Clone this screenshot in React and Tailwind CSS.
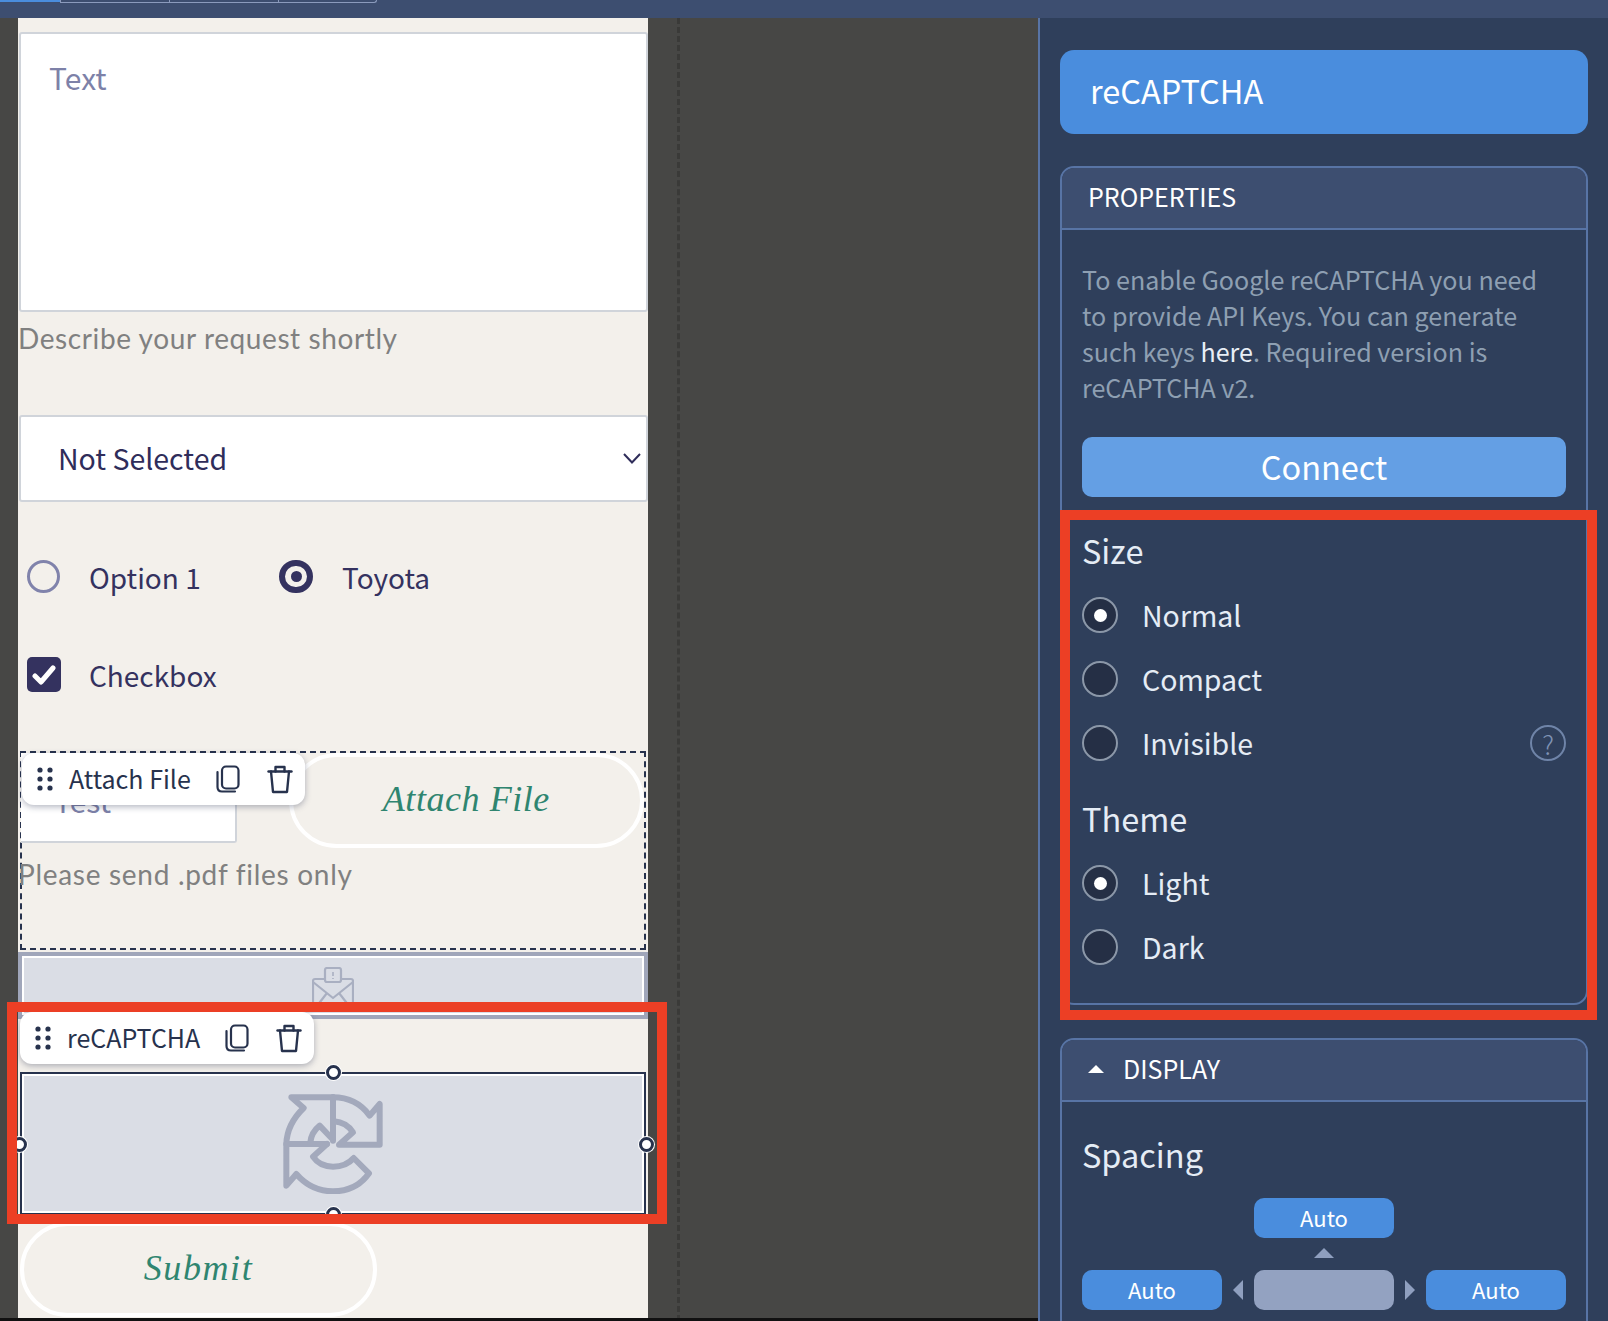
const ui = "font-['Noto_Sans_CJK_SC','Noto_Sans',sans-serif]";

function Radio({ checked }) {
    return (
        <span className="w-9 h-9 shrink-0 rounded-full border-2 border-[#8b97a8] bg-[#252f45] flex items-center justify-center">
            {checked && <span className="w-[13px] h-[13px] rounded-full bg-white" />}
        </span>
    );
}

function RadioRow({ label, checked, help }) {
    return (
        <div className="flex items-center h-9 mb-7 last:mb-0">
            <Radio checked={checked} />
            <span className="ml-[24px] text-[28.5px] leading-9 text-[#e5ecf5]">{label}</span>
            {help && (
                <span className="ml-auto w-9 h-9 rounded-full border-2 border-[#6f84a8] flex items-center justify-center text-[26px] font-light text-[#7f93b5]">?</span>
            )}
        </div>
    );
}

function AutoButton({ muted }) {
    return (
        <div className={`w-[140px] h-10 rounded-[10px] flex items-center justify-center pb-[2px] text-[22px] text-white ${muted ? 'bg-[#93a2c1]' : 'bg-[#4a8ddd]'}`}>
            {!muted && 'Auto'}
        </div>
    );
}

function CopyIcon() {
    return (
        <svg width="24" height="28" viewBox="0 0 24 28" fill="none" stroke="#27324d" strokeWidth="2.2" strokeLinecap="round" strokeLinejoin="round">
            <rect x="6" y="1.5" width="16.5" height="22" rx="4" />
            <path d="M1.5 7V22Q1.5 26.5 6 26.5H19" />
        </svg>
    );
}

function TrashIcon() {
    return (
        <svg width="26" height="29" viewBox="0 0 26 29" fill="none" stroke="#27324d" strokeWidth="2.4" strokeLinecap="round" strokeLinejoin="round">
            <path d="M1.5 6.5H24.5" />
            <path d="M8.5 6.5V2H17.5V6.5" />
            <path d="M4 6.5L6 27H20L22 6.5" />
        </svg>
    );
}

function Toolbar({ label, className }) {
    return (
        <div className={`absolute z-20 h-[52px] bg-white rounded-[12px] shadow-[0_2px_6px_rgba(40,50,80,0.35)] flex items-center pl-[15px] text-[#27324d] text-[25px] ${ui} ${className}`}>
            <svg width="16" height="24" viewBox="0 0 16 24" fill="#27324d">
                <circle cx="3" cy="3" r="2.6" /><circle cx="13" cy="3" r="2.6" />
                <circle cx="3" cy="12" r="2.6" /><circle cx="13" cy="12" r="2.6" />
                <circle cx="3" cy="21" r="2.6" /><circle cx="13" cy="21" r="2.6" />
            </svg>
            <span className="ml-[16px] whitespace-nowrap">{label}</span>
            <span className="ml-[25px] flex"><CopyIcon /></span>
            <span className="ml-[27px] flex"><TrashIcon /></span>
        </div>
    );
}

function Handle({ className }) {
    return <span className={`absolute z-10 w-[15px] h-[15px] rounded-full bg-white border-[3px] border-[#27324d] ring-1 ring-white ${className}`} />;
}

function RecaptchaIcon() {
    return (
        <svg width="100" height="100" viewBox="130 100 300 300" fill="none" stroke="#a3a9bc" strokeWidth="18" strokeLinejoin="round" strokeLinecap="round">
            <path d="M280 110H155L192 142Q142 190 140 250H262" />
            <path d="M212 245Q215 215 240 195L278 235" />
            <path d="M280 110V240" />
            <path d="M280 110Q350 110 390 165L420 130V252H298L340 215Q320 185 283 182" />
            <path d="M140 250V375L170 340Q215 392 280 392Q350 392 388 338L342 292Q320 318 280 318Q240 318 220 288L262 250" />
        </svg>
    );
}

function MailIcon() {
    return (
        <svg width="42" height="48" viewBox="0 0 42 48" fill="none" stroke="#a9afc1" strokeWidth="2.2" strokeLinejoin="round">
            <path d="M13 13V3Q13 1 15 1H27Q29 1 29 3V13Q29 15 27 15H15Q13 15 13 13Z" />
            <path d="M21 5V9M21 11V12" strokeWidth="1.6" />
            <path d="M13 12H3Q1 12 1 14V44H41V14Q41 12 39 12H29" />
            <path d="M1 15L21 31L41 15M1 44L15 26M41 44L27 26" />
        </svg>
    );
}

function Pill({ label, className }) {
    return (
        <div className={`h-[95px] rounded-[48px] border-4 border-white flex items-center justify-center pb-[4px] italic text-[36px] text-[#2f8570] font-['Liberation_Serif',serif] ${className}`}>
            {label}
        </div>
    );
}

function Section({ title, caret, className, children }) {
    return (
        <section className={`border-2 border-[#5874a5] rounded-[14px] overflow-hidden ${className}`}>
            <div className="h-[62px] bg-[#3d4e70] border-b-2 border-[#5874a5] flex items-center pl-[26px] pb-[2px] text-[25px] text-white">
                {caret && <span className="w-0 h-0 border-x-[8px] border-x-transparent border-b-[8px] border-b-white mr-[19px]" />}
                {title}
            </div>
            {children}
        </section>
    );
}

export default function App() {
    return (
        <div className={`relative w-[1608px] h-[1321px] overflow-hidden flex flex-col bg-[#2f3f5b] ${ui}`}>
            {/* top bar with cut off tabs */}
            <div className="h-[18px] shrink-0 bg-[#3d4e70] flex items-start">
                <div className="w-[60px] h-[2px] bg-[#4a8ddd]" />
                <div className="w-[109px] h-[3px] border-l border-b border-[#8b9bbd]" />
                <div className="w-[109px] h-[3px] border-l border-b border-[#8b9bbd]" />
                <div className="w-[99px] h-[3px] border-l border-b border-r border-[#8b9bbd] rounded-br-[8px]" />
            </div>

            <div className="flex flex-1 min-h-0">
                {/* canvas */}
                <div className="relative w-[1040px] shrink-0 bg-[#474745] border-r-2 border-[#5874a5] pl-[18px]">
                    <div className="absolute left-[677px] top-0 bottom-0 border-l-[3px] border-dashed border-[#3a3a38]" />
                    <div className="absolute left-0 right-0 bottom-0 h-[3px] bg-[#111111]" />

                    <div className="relative w-[630px] h-[1300px] bg-[#f3f0eb] flex flex-col">
                        {/* textarea */}
                        <div className="mt-[14px] ml-px w-[629px] h-[280px] bg-white border-2 border-[#d0d4da] rounded-[3px] pl-[28px] pt-[21px] text-[30px] leading-[44px] text-[#7d81a8]">
                            Text
                        </div>
                        <div className="mt-[8px] h-[36px] text-[28px] leading-[36px] tracking-[0.6px] text-[#808080] font-['Lato',sans-serif]">
                            Describe your request shortly
                        </div>

                        {/* select */}
                        <div className="mt-[59px] ml-px w-[629px] h-[87px] bg-white border-2 border-[#d0d4da] rounded-[3px] flex items-center pl-[37px] pr-[5px] text-[28.5px] text-[#2f2d5a]">
                            Not Selected
                            <svg className="ml-auto" width="18" height="11" viewBox="0 0 18 11" fill="none" stroke="#2f2d5a" strokeWidth="2">
                                <path d="M1 1L9 9.5L17 1" />
                            </svg>
                        </div>

                        {/* radios */}
                        <div className="mt-[58px] h-[33px] pl-[9px] flex items-center text-[28px] text-[#34325f]">
                            <span className="w-[33px] h-[33px] rounded-full border-[3px] border-[#8083ab]" />
                            <span className="ml-[29px] w-[190px]">Option 1</span>
                            <span className="w-[34px] h-[33px] rounded-full border-[6px] border-[#34325f] flex items-center justify-center">
                                <span className="w-[11px] h-[11px] rounded-full bg-[#34325f]" />
                            </span>
                            <span className="ml-[29px]">Toyota</span>
                        </div>

                        {/* checkbox */}
                        <div className="mt-[64px] h-[35px] pl-[9px] flex items-center text-[28px] text-[#34325f]">
                            <span className="w-[34px] h-[35px] rounded-[5px] bg-[#34325f] flex items-center justify-center">
                                <svg width="24" height="20" viewBox="0 0 24 20" fill="none" stroke="#ffffff" strokeWidth="5" strokeLinecap="round" strokeLinejoin="round">
                                    <path d="M3 11L9 17L21 3" />
                                </svg>
                            </span>
                            <span className="ml-[28px]">Checkbox</span>
                        </div>

                        {/* attach file block */}
                        <div className="mt-[59px] ml-[2px] w-[626px] h-[199px] border-2 border-dashed border-[#27324d]">
                            <div className="flex">
                                <div className="w-[216px] h-[90px] -ml-[1px] bg-white border-r-2 border-b-2 border-[#d0d4da] rounded-br-[3px] pl-[33px] pt-[25px] text-[30px] leading-[44px] text-[#7d81a8]">
                                    Test
                                </div>
                                <Pill label="Attach File" className="ml-[52px] w-[356px] tracking-[0.55px]" />
                            </div>
                            <div className="mt-[8px] -ml-[4px] h-[36px] text-[28px] leading-[36px] tracking-[0.7px] text-[#808080] font-['Lato',sans-serif]">
                                Please send .pdf files only
                            </div>
                        </div>
                        <Toolbar label="Attach File" className="left-[4px] top-[735px] w-[283px]" />

                        {/* email placeholder */}
                        <div className="mt-[2px] h-[67px] shrink-0 bg-[#dadde5] border-4 border-[#a0a6ba] outline-2 -outline-offset-6 outline-white flex justify-center overflow-hidden pt-[11px]">
                            <MailIcon />
                        </div>

                        {/* selected recaptcha */}
                        <div className="relative mt-[53px] ml-[2px] w-[626px] h-[143px] shrink-0 border-2 border-[#27324d] bg-[#dadde5] outline-2 -outline-offset-4 outline-white flex items-center justify-center">
                            <RecaptchaIcon />
                            <Handle className="left-1/2 -top-[9px] -ml-[7px]" />
                            <Handle className="-left-[10px] top-1/2 -mt-[7px]" />
                            <Handle className="-right-[10px] top-1/2 -mt-[7px]" />
                            <Handle className="left-1/2 -bottom-[9px] -ml-[7px]" />
                        </div>
                        <Toolbar label="reCAPTCHA" className="left-[2px] top-[994px] w-[294px]" />

                        <Pill label="Submit" className="mt-[7px] ml-[2px] w-[357px] tracking-[1.6px]" />
                    </div>
                </div>

                {/* properties panel */}
                <div className="flex-1 min-w-0 pl-5 pr-5 pt-8">
                    <div className="h-[84px] rounded-[14px] bg-[#4a8ddd] flex items-center pl-[30px] pb-[4px] text-[32.5px] text-white">
                        reCAPTCHA
                    </div>

                    <Section title="PROPERTIES" className="mt-8 h-[839px]">
                        <div className="px-5 pt-[31px] text-[25.1px] leading-[36px] text-[#8e9fb2]">
                            To enable Google reCAPTCHA you need to provide API Keys. You can generate such keys <span className="text-[#e8eef6]">here</span>. Required version is reCAPTCHA v2.
                        </div>
                        <div className="mx-5 mt-[32px] h-[60px] rounded-[10px] bg-[#649fe4] flex items-center justify-center pb-[2px] text-[32.5px] text-white">
                            Connect
                        </div>
                        <div className="px-5 mt-[27px]">
                            <div className="h-[52px] text-[32.5px] leading-[52px] text-[#e5ecf5]">Size</div>
                            <div className="mt-[21px]">
                                <RadioRow label="Normal" checked />
                                <RadioRow label="Compact" />
                                <RadioRow label="Invisible" help />
                            </div>
                            <div className="mt-[31px] h-[52px] text-[32.5px] leading-[52px] text-[#e5ecf5]">Theme</div>
                            <div className="mt-[21px]">
                                <RadioRow label="Light" checked />
                                <RadioRow label="Dark" />
                            </div>
                        </div>
                    </Section>

                    <Section title="DISPLAY" caret className="mt-[33px] h-[300px]">
                        <div className="px-5 pt-[26px]">
                            <div className="h-[52px] text-[32.5px] leading-[52px] text-[#e5ecf5]">Spacing</div>
                            <div className="mt-[18px] flex flex-col items-center">
                                <AutoButton />
                                <span className="mt-[10px] mb-[12px] w-0 h-0 border-x-[10px] border-x-transparent border-b-[10px] border-b-[#8f9fbf]" />
                                <div className="w-full flex items-center justify-between">
                                    <AutoButton />
                                    <span className="w-0 h-0 border-y-[10px] border-y-transparent border-r-[10px] border-r-[#8f9fbf]" />
                                    <AutoButton muted />
                                    <span className="w-0 h-0 border-y-[10px] border-y-transparent border-l-[10px] border-l-[#8f9fbf]" />
                                    <AutoButton />
                                </div>
                            </div>
                        </div>
                    </Section>
                </div>
            </div>

            {/* annotation boxes */}
            <div className="absolute z-30 left-[7px] top-[1002px] w-[660px] h-[222px] border-[10px] border-[#ec3f25]" />
            <div className="absolute z-30 left-[1060px] top-[510px] w-[537px] h-[510px] border-[10px] border-[#ec3f25]" />
        </div>
    );
}
